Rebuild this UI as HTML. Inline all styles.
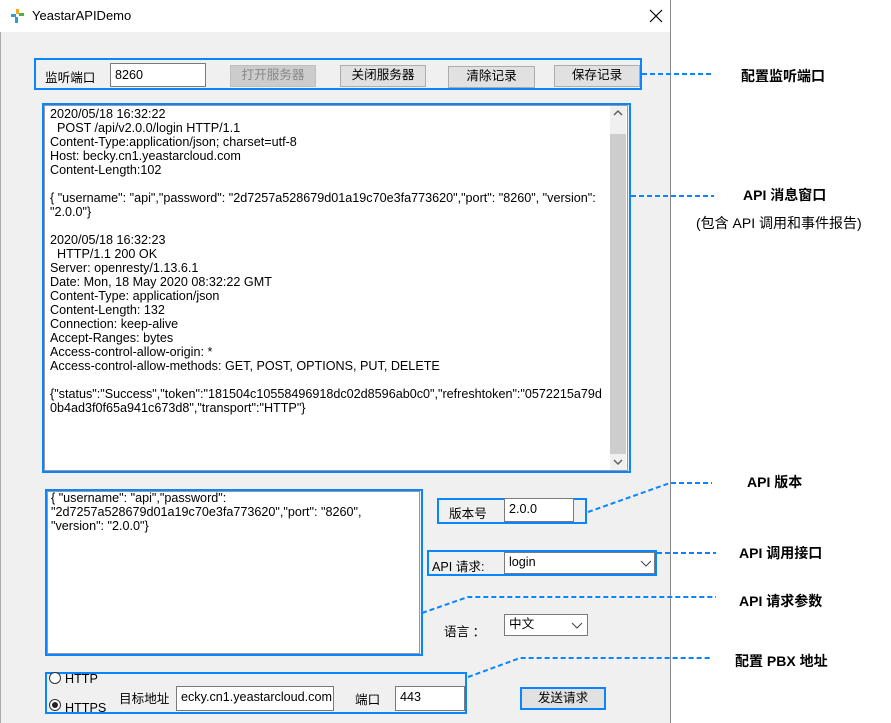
<!DOCTYPE html>
<html><head><meta charset="utf-8"><style>
*{margin:0;padding:0;box-sizing:border-box}
body{width:891px;height:723px;background:#fff;position:relative;overflow:hidden;font-family:"Liberation Sans","Noto Sans CJK SC",sans-serif;font-size:12px;color:#000}
.a{position:absolute}
.blue{position:absolute;border:2px solid #0a84ff}
.in{position:absolute;background:#fff;border:1px solid #7a7a7a;padding:2px 4px;white-space:nowrap;overflow:hidden}
.btn{position:absolute;background:#e1e1e1;border:1px solid #adadad;text-align:center;line-height:19px}
.lbl{position:absolute;font-weight:bold;font-size:14px;white-space:nowrap}
svg{position:absolute;left:0;top:0}
.t{font-size:12.6px}
</style></head><body>
<div class="a" style="left:0;top:0;width:671px;height:723px;background:#f0f0f0;border-right:1px solid #888;border-left:1px solid #aaa"></div>
<div class="a" style="left:0;top:0;width:671px;height:32px;background:#fff;border-right:1px solid #888"></div>
<svg width="20" height="20" style="left:10px;top:8px"><rect x="6" y="1" width="3" height="5" fill="#f5a623"/><rect x="1" y="6" width="5" height="3" fill="#2a9fd6"/><rect x="9" y="5" width="5" height="3" fill="#4caf50"/><rect x="5" y="9" width="3" height="6" fill="#2a9fd6"/></svg>
<div class="a" style="left:32px;top:8px;font-size:13px">YeastarAPIDemo</div>
<svg width="14" height="14" style="left:649px;top:9px"><path d="M1 1L13 13M13 1L1 13" stroke="#000" stroke-width="1.2"/></svg>

<div class="blue" style="left:34px;top:58px;width:608px;height:32px"></div>
<div class="a t" style="left:45px;top:67px">监听端口</div>
<div class="in t" style="left:110px;top:63px;width:96px;height:24px;line-height:18px">8260</div>
<div class="btn t" style="left:230px;top:65px;width:86px;height:22px;color:#888;background:#ccc;border-color:#bfbfbf">打开服务器</div>
<div class="btn t" style="left:340px;top:65px;width:86px;height:22px">关闭服务器</div>
<div class="btn t" style="left:448px;top:66px;width:87px;height:22px">清除记录</div>
<div class="btn t" style="left:554px;top:65px;width:86px;height:22px">保存记录</div>

<div class="blue" style="left:42px;top:103px;width:589px;height:370px"></div>
<div class="a" style="left:44px;top:105px;width:584px;height:366px;background:#fff;border:1px solid #999"></div>
<div class="a" style="left:610px;top:106px;width:16px;height:364px;background:#f0f0f0"></div>
<div class="a" style="left:610px;top:134px;width:16px;height:320px;background:#cdcdcd"></div>
<svg width="16" height="10" style="left:610px;top:108px"><path d="M4 7L8 3L12 7" stroke="#606060" stroke-width="1.5" fill="none"/></svg>
<svg width="16" height="10" style="left:610px;top:457px"><path d="M4 3L8 7L12 3" stroke="#606060" stroke-width="1.5" fill="none"/></svg>
<div class="a t" style="left:50px;top:107px;width:560px;line-height:14px;white-space:pre">2020/05/18 16:32:22
  POST /api/v2.0.0/login HTTP/1.1
Content-Type:application/json; charset=utf-8
Host: becky.cn1.yeastarcloud.com
Content-Length:102

{ "username": "api","password": "2d7257a528679d01a19c70e3fa773620","port": "8260", "version": 
"2.0.0"}

2020/05/18 16:32:23
  HTTP/1.1 200 OK
Server: openresty/1.13.6.1
Date: Mon, 18 May 2020 08:32:22 GMT
Content-Type: application/json
Content-Length: 132
Connection: keep-alive
Accept-Ranges: bytes
Access-control-allow-origin: *
Access-control-allow-methods: GET, POST, OPTIONS, PUT, DELETE

{"status":"Success","token":"181504c10558496918dc02d8596ab0c0","refreshtoken":"0572215a79d
0b4ad3f0f65a941c673d8","transport":"HTTP"}</div>

<div class="blue" style="left:45px;top:489px;width:378px;height:167px"></div>
<div class="a" style="left:47px;top:491px;width:373px;height:163px;background:#fff;border:1px solid #999"></div>
<div class="a t" style="left:51px;top:491px;line-height:14px;white-space:pre">{ "username": "api","password": 
"2d7257a528679d01a19c70e3fa773620","port": "8260", 
"version": "2.0.0"}</div>

<div class="blue" style="left:437px;top:498px;width:150px;height:26px"></div>
<div class="a t" style="left:449px;top:503px">版本号</div>
<div class="in t" style="left:504px;top:498px;width:70px;height:24px;line-height:16px">2.0.0</div>

<div class="blue" style="left:427px;top:550px;width:230px;height:26px"></div>
<div class="a t" style="left:432px;top:556px">API 请求:</div>
<div class="in t" style="left:504px;top:552px;width:151px;height:22px;line-height:15px">login</div>
<svg width="12" height="8" style="left:640px;top:560px"><path d="M1 1L6 6L11 1" stroke="#444" fill="none"/></svg>

<div class="a t" style="left:444px;top:621px">语言 ：</div>
<div class="in t" style="left:504px;top:614px;width:84px;height:22px;line-height:15px">中文</div>
<svg width="12" height="8" style="left:571px;top:622px"><path d="M1 1L6 6L11 1" stroke="#444" fill="none"/></svg>

<div class="blue" style="left:45px;top:672px;width:422px;height:42px"></div>
<div class="a" style="left:49px;top:672px;width:12px;height:12px;border:1px solid #333;border-radius:50%;background:#fff"></div>
<div class="a t" style="left:65px;top:672px">HTTP</div>
<div class="a" style="left:49px;top:699px;width:12px;height:12px;border:1px solid #333;border-radius:50%;background:#fff"></div>
<div class="a" style="left:52px;top:702px;width:6px;height:6px;border-radius:50%;background:#222"></div>
<div class="a t" style="left:65px;top:701px">HTTPS</div>
<div class="a t" style="left:119px;top:688px">目标地址</div>
<div class="in t" style="left:176px;top:686px;width:158px;height:25px;line-height:17px">ecky.cn1.yeastarcloud.com</div>
<div class="a t" style="left:355px;top:689px">端口</div>
<div class="in t" style="left:395px;top:686px;width:70px;height:25px;line-height:17px">443</div>
<div class="btn t" style="left:520px;top:687px;width:86px;height:23px;border:2px solid #0a84ff;line-height:18px">发送请求</div>

<svg width="891" height="723" style="left:0;top:0"><g stroke="#0a84ff" stroke-width="2" stroke-dasharray="5,3" fill="none">
<path d="M642 74H712"/><path d="M631 196H714"/>
<path d="M588 512L670 483H712"/><path d="M657 553H716"/>
<path d="M422 613L468 597H716"/><path d="M468 677L520 658H710"/>
</g></svg>
<div class="lbl" style="left:741px;top:66px">配置监听端口</div>
<div class="lbl" style="left:743px;top:185px">API 消息窗口</div>
<div class="a" style="left:696px;top:213px;font-size:14px;white-space:nowrap">(包含 API 调用和事件报告)</div>
<div class="lbl" style="left:747px;top:472px">API 版本</div>
<div class="lbl" style="left:739px;top:543px">API 调用接口</div>
<div class="lbl" style="left:739px;top:591px">API 请求参数</div>
<div class="lbl" style="left:735px;top:651px">配置 PBX 地址</div>
</body></html>
